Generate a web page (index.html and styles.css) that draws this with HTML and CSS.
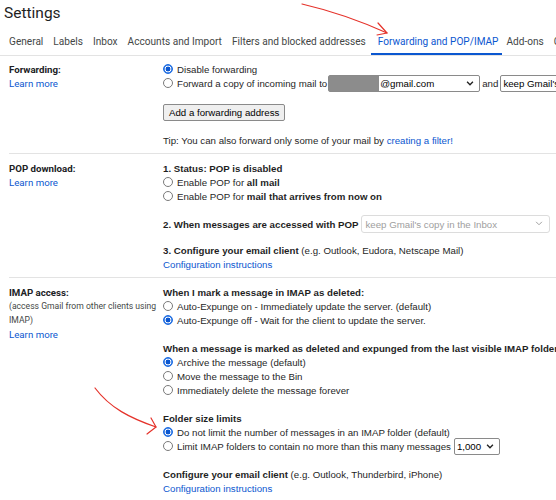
FILE: index.html
```html
<!DOCTYPE html>
<html lang="en">
<head>
    <meta charset="UTF-8">
    <meta name="viewport" content="width=device-width, initial-scale=1.0">
    <title>Settings</title>
    <link rel="stylesheet" href="styles.css">
</head>
<body>
    <div class="page">
        <h1 class="title">Settings</h1>

        <nav class="tabs">
            <a class="tab">General</a>
            <a class="tab">Labels</a>
            <a class="tab">Inbox</a>
            <a class="tab">Accounts and Import</a>
            <a class="tab">Filters and blocked addresses</a>
            <a class="tab active">Forwarding and POP/IMAP</a>
            <a class="tab">Add-ons</a>
            <a class="tab">Chat and Meet</a>
        </nav>

        <!-- Forwarding -->
        <section class="row first">
            <div class="label">
                <div class="line"><b>Forwarding:</b></div>
                <div class="line"><a class="link">Learn more</a></div>
            </div>
            <div class="field">
                <div class="block">
                    <div class="line"><span class="radio on"></span>Disable forwarding</div>
                    <div class="line">
                        <span class="radio"></span>Forward a copy of incoming mail to
                        <span class="select address">
                            <span class="hidden-part"></span>@gmail.com
                            <svg class="chevron" viewBox="0 0 9 6"><path d="M1 1l3.5 3.5L8 1"/></svg>
                        </span>
                        and
                        <span class="select keep">keep Gmail's copy in the Inbox</span>
                    </div>
                </div>
                <div class="block button-row">
                    <span class="button">Add a forwarding address</span>
                </div>
                <div class="block tip">
                    <div class="line">Tip: You can also forward only some of your mail by&nbsp;<a class="link">creating a filter!</a></div>
                </div>
            </div>
        </section>

        <!-- POP download -->
        <section class="row">
            <div class="label">
                <div class="line"><b>POP download:</b></div>
                <div class="line"><a class="link">Learn more</a></div>
            </div>
            <div class="field">
                <div class="block">
                    <div class="line"><b>1. Status: POP is disabled</b></div>
                    <div class="line"><span class="radio"></span>Enable POP for&nbsp;<b>all mail</b></div>
                    <div class="line"><span class="radio"></span>Enable POP for&nbsp;<b>mail that arrives from now on</b></div>
                </div>
                <div class="block">
                    <div class="line">
                        <b>2. When messages are accessed with POP</b>
                        <span class="select disabled">
                            keep Gmail's copy in the Inbox
                            <svg class="chevron" viewBox="0 0 9 6"><path d="M1 1l3.5 3.5L8 1"/></svg>
                        </span>
                    </div>
                </div>
                <div class="block tight">
                    <div class="line"><b>3. Configure your email client</b>&nbsp;(e.g. Outlook, Eudora, Netscape Mail)</div>
                    <div class="line"><a class="link">Configuration instructions</a></div>
                </div>
            </div>
        </section>

        <!-- IMAP access -->
        <section class="row">
            <div class="label">
                <div class="line"><b>IMAP access:</b></div>
                <div class="line small">(access Gmail from other clients using</div>
                <div class="line small">IMAP)</div>
                <div class="line"><a class="link">Learn more</a></div>
            </div>
            <div class="field">
                <div class="block">
                    <div class="line"><b>When I mark a message in IMAP as deleted:</b></div>
                    <div class="line"><span class="radio"></span>Auto-Expunge on - Immediately update the server. (default)</div>
                    <div class="line"><span class="radio on"></span>Auto-Expunge off - Wait for the client to update the server.</div>
                </div>
                <div class="block">
                    <div class="line"><b>When a message is marked as deleted and expunged from the last visible IMAP folder:</b></div>
                    <div class="line"><span class="radio on"></span>Archive the message (default)</div>
                    <div class="line"><span class="radio"></span>Move the message to the Bin</div>
                    <div class="line"><span class="radio"></span>Immediately delete the message forever</div>
                </div>
                <div class="block">
                    <div class="line"><b>Folder size limits</b></div>
                    <div class="line"><span class="radio on"></span>Do not limit the number of messages in an IMAP folder (default)</div>
                    <div class="line">
                        <span class="radio"></span>Limit IMAP folders to contain no more than this many messages
                        <span class="select count">
                            1,000
                            <svg class="chevron" viewBox="0 0 9 6"><path d="M1 1l3.5 3.5L8 1"/></svg>
                        </span>
                    </div>
                </div>
                <div class="block">
                    <div class="line"><b>Configure your email client</b>&nbsp;(e.g. Outlook, Thunderbird, iPhone)</div>
                    <div class="line"><a class="link">Configuration instructions</a></div>
                </div>
            </div>
        </section>

        <!-- hand-drawn red arrows on top of the page -->
        <svg class="marks" width="556" height="500" viewBox="0 0 556 500">
            <path d="M302 4 Q345 14 387 33"/>
            <path d="M378 23 L387 33 L377 35"/>
            <path d="M95 388 C110 408 130 418 156 427"/>
            <path d="M151 418 L156 427 L147 434"/>
        </svg>
    </div>
</body>
</html>
```

FILE: styles.css
```css
body {
    margin: 0;
    background-color: #fff;
    color: #1f1f1f;
    font-family: "Liberation Sans", Arial, sans-serif;
    font-size: 9.7px;
    overflow: hidden;
}
.page {
    position: relative;
    width: 556px;
    height: 500px;
    overflow: hidden;
}
.title {
    margin: 0;
    padding: 4px 0 0 4px;
    font-family: Roboto, sans-serif;
    font-size: 15.5px;
    font-weight: 400;
    line-height: 18px;
    color: #1f1f1f;
}
.tabs {
    display: flex;
    white-space: nowrap;
    padding-left: 4px;
    border-bottom: 1px solid #e3e3e3;
}
.tab {
    flex-shrink: 0;
    padding: 13px 5px 4px;
    font-family: Roboto, sans-serif;
    font-size: 10.1px;
    line-height: 14px;
    color: #444746;
    border-bottom: 2px solid transparent;
}
.tab.active {
    padding-left: 7px;
    padding-right: 3px;
    color: #0b57d0;
    border-bottom-color: #0b57d0;
}
.row {
    display: flex;
    margin-left: 9px;
    padding: 7px 0 6px;
    border-bottom: 1px solid #e3e3e3;
}
.row.first {
    padding-top: 6px;
}
.row:last-of-type {
    border-bottom: none;
}
.label {
    flex: 0 0 154px;
    font-family: Roboto, sans-serif;
}
.label b {
    font-weight: 700;
    color: #202124;
}
.label .small {
    font-size: 8.6px;
    color: #444746;
}
.field {
    flex: 1;
    min-width: 0;
}
.line {
    display: flex;
    align-items: center;
    height: 14px;
    white-space: nowrap;
}
.field b {
    font-weight: 700;
}
.block + .block {
    margin-top: 14px;
}
.block.tight {
    margin-top: 12px;
}
.block.tip {
    margin-top: 12px;
}
.link {
    color: #0b57d0;
    text-decoration: none;
}
.radio {
    box-sizing: border-box;
    flex: 0 0 10px;
    width: 10px;
    height: 10px;
    margin-right: 4px;
    border: 1px solid #7a7a7a;
    border-radius: 50%;
    background: #fff;
}
.radio.on {
    border-color: #1a6be0;
    background: radial-gradient(circle, #0b57d0 0 2.2px, #fff 2.7px 3.2px, #3a7ee8 3.6px);
}
.select {
    box-sizing: border-box;
    position: relative;
    flex-shrink: 0;
    display: flex;
    align-items: center;
    height: 17px;
    margin: 0 3px;
    padding: 0 2px;
    border: 1px solid #8a8a8a;
    border-radius: 2px;
    background: #fff;
    color: #000;
}
.chevron {
    position: absolute;
    right: 5px;
    top: 5px;
    width: 8px;
    height: 5px;
    fill: none;
    stroke: #222;
    stroke-width: 1.6;
}
.select.address {
    width: 152px;
    margin: 0 2px 0 1px;
    padding: 0;
}
.hidden-part {
    align-self: stretch;
    width: 50px;
    margin-right: 1px;
    background: #8c8c8c;
}
.select.keep {
    width: 130px;
    margin-left: 2px;
}
.select.disabled {
    width: 189px;
    height: 18px;
    padding-left: 3px;
    border-color: #dcdcdc;
    border-radius: 3px;
    color: #9e9e9e;
}
.select.disabled .chevron {
    stroke: #a0a0a0;
    stroke-width: 1.2;
    right: 6px;
}
.select.count {
    width: 46px;
    padding-left: 2px;
    margin-left: 3px;
}
.button-row {
    height: 17px;
    display: flex;
    align-items: center;
}
.button {
    box-sizing: border-box;
    display: inline-flex;
    align-items: center;
    height: 17px;
    padding: 0 5px;
    border: 1px solid #8a8a8a;
    border-radius: 2px;
    background: #efefef;
    color: #000;
}
.marks {
    position: absolute;
    top: 0;
    left: 0;
    pointer-events: none;
    fill: none;
    stroke: #e5322a;
    stroke-width: 1.2;
    stroke-linecap: round;
    stroke-linejoin: round;
}
```
